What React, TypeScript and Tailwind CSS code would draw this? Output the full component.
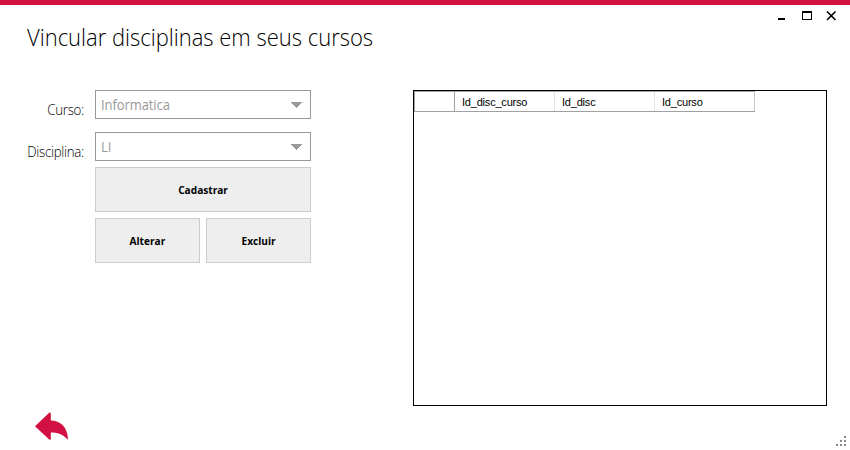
import React from "react";

function Select({ value }: { value: string }) {
  return (
    <div className="flex h-[29px] w-[216px] items-center justify-between border border-[#999999] pl-[5px] pr-[8px]">
      <span className="origin-left scale-x-[0.93] whitespace-nowrap text-[14px] leading-[20px] tracking-[-0.1px] text-[#999999]">{value}</span>
      <svg width="12" height="6" viewBox="0 0 12 6" shapeRendering="crispEdges">
        <path d="M0 0H12L6 6Z" fill="#999999" />
      </svg>
    </div>
  );
}

function Button({ label, size }: { label: string; size: string }) {
  return (
    <button className={`flex h-[45px] items-center justify-center border border-[#cccccc] bg-[#eeeeee] pt-[2px] text-[11px] font-bold text-black ${size}`}>
      <span className="scale-x-[0.92]">{label}</span>
    </button>
  );
}

function FieldLabel({ text }: { text: string }) {
  return (
    <label className="mt-[10px] mr-[11px] w-[84px] origin-right scale-x-[0.95] text-right text-[14px] leading-[20px] font-light tracking-[-0.3px]">
      {text}
    </label>
  );
}

function WindowControls() {
  return (
    <svg className="mt-[6px] mr-[13px]" width="60" height="18" viewBox="0 0 60 18" fill="none" stroke="black">
      <path d="M1 8H8" strokeWidth="2" />
      <path d="M25.5 1V9M34.5 1V9M25 8.5H35" />
      <path d="M25 1H35" strokeWidth="2" />
      <path d="M50 0.5L58.5 9M58.5 0.5L50 9" strokeWidth="1.6" />
    </svg>
  );
}

function DataGrid() {
  return (
    <div className="h-[316px] w-[414px] border border-black font-['Liberation_Sans',sans-serif] text-[11px] tracking-[-0.2px]">
      <div className="flex h-[21px] w-[341px] border-y border-[#a0a0a0] leading-[21px]">
        <div className="w-[41px] border-x border-[#a0a0a0]" />
        <div className="w-[100px] border-r border-[#e3e3e3] pl-[7px]">Id_disc_curso</div>
        <div className="w-[100px] border-r border-[#e3e3e3] pl-[7px]">Id_disc</div>
        <div className="w-[100px] border-r border-[#c8c8c8] pl-[7px]">Id_curso</div>
      </div>
    </div>
  );
}

export default function App() {
  return (
    <div className="flex h-[450px] w-[850px] flex-col overflow-hidden border-t-[5px] border-[#d11141] bg-white font-['Open_Sans',sans-serif] text-black">
      <header className="flex h-[85px] items-start justify-between">
        <h1 className="mt-[15px] ml-[27px] origin-left scale-x-[0.916] whitespace-nowrap text-[24px] leading-[34px] font-light">
          Vincular disciplinas em seus cursos
        </h1>
        <WindowControls />
      </header>
      <main className="flex h-[316px]">
        <section className="w-[413px]">
          <div className="flex h-[42px]">
            <FieldLabel text="Curso:" />
            <Select value="Informatica" />
          </div>
          <div className="flex h-[35px]">
            <FieldLabel text="Disciplina:" />
            <Select value="LI" />
          </div>
          <div className="ml-[95px] flex w-[216px] flex-wrap gap-[6px]">
            <Button label="Cadastrar" size="w-[216px]" />
            <Button label="Alterar" size="w-[105px]" />
            <Button label="Excluir" size="w-[105px]" />
          </div>
        </section>
        <DataGrid />
      </main>
      <footer className="flex flex-1 justify-between">
        <svg className="mt-[6px] ml-[35px]" width="34" height="28" viewBox="0 0 34 28" fill="#d11141">
          <path d="M0 14.3L14.2 0.8Q15.5 0.2 15.8 1.4V8.5C25 8.5 33 15 33 27.8C27 21.4 22 20.4 15.8 20.4V27.2Q15.5 28.3 14.2 27.6Z" />
        </svg>
        <svg className="mt-[30px] mr-[3px]" width="11" height="10" viewBox="0 0 11 10" fill="#888888" shapeRendering="crispEdges">
          <path d="M8 0h2v2h-2zM4 4h2v2h-2zM8 4h2v2h-2zM0 8h2v2h-2zM4 8h2v2h-2zM8 8h2v2h-2z" />
        </svg>
      </footer>
    </div>
  );
}
